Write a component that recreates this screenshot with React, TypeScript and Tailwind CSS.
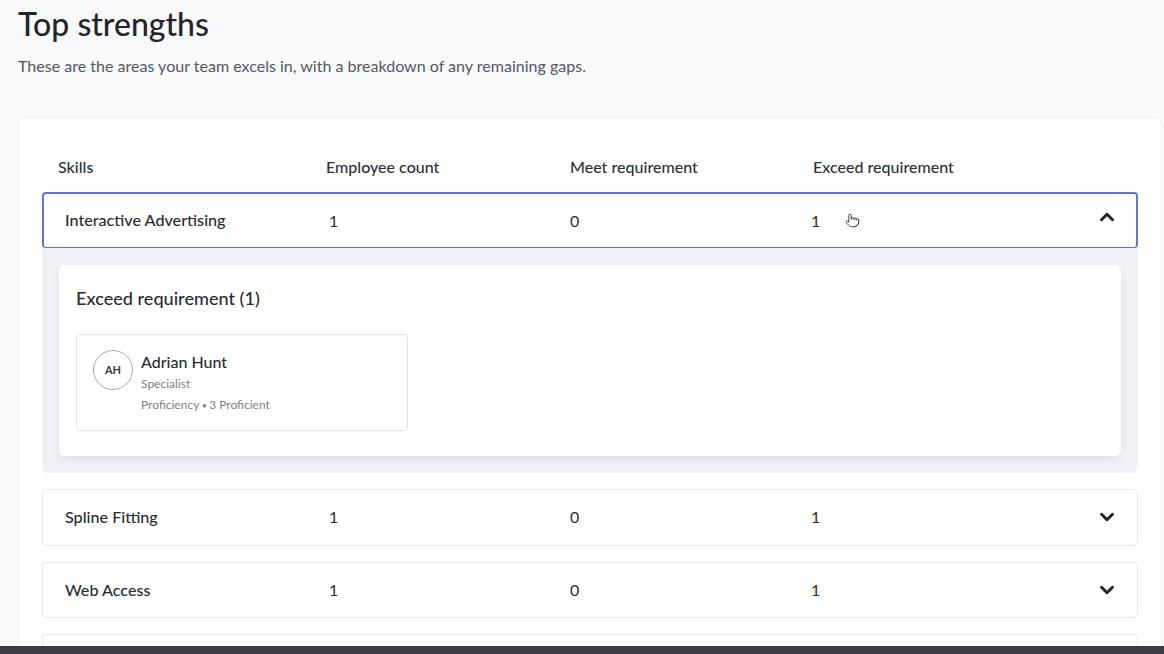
import React from 'react';
import { ChevronDown, ChevronUp, Pointer } from 'lucide-react';

const skills = [
  { name: 'Spline Fitting', count: 1, meet: 0, exceed: 1 },
  { name: 'Web Access', count: 1, meet: 0, exceed: 1 },
];

function RowCells({ name, count, meet, exceed }: { name: string; count: number; meet: number; exceed: number }) {
  return (
    <>
      <div className="w-[264px] text-[16.15px] font-medium text-[#2a2b2f]">{name}</div>
      <div className="w-[241px] text-[16px] text-[#2a2b2f]">{count}</div>
      <div className="w-[241px] text-[16px] text-[#2a2b2f]">{meet}</div>
      <div className="w-[34px] text-[16px] text-[#2a2b2f]">{exceed}</div>
    </>
  );
}

export default function App() {
  return (
    <div className="flex h-[654px] w-[1164px] flex-col overflow-hidden bg-[#f8f9fb] font-['Lato',sans-serif]">
      <div className="min-h-0 flex-1 overflow-hidden pl-[18px] pr-[2px]">
        <h1 className="mt-[5px] text-[32px] leading-[38px] font-medium text-[#23242a]">Top strengths</h1>
        <p className="mt-[11px] text-[16.05px] leading-[24px] text-[#55575e]">
          These are the areas your team excels in, with a breakdown of any remaining gaps.
        </p>

        <div className="mt-[39px] rounded-t-lg border border-[#eff0f3] bg-white px-[23px] pt-[37px] pb-4">
          <div className="flex h-[24px] items-center pl-[16px] text-[16.05px] leading-[24px] font-medium text-[#2f3036]">
            <div className="w-[268px]">Skills</div>
            <div className="w-[244px]">Employee count</div>
            <div className="w-[243px]">Meet requirement</div>
            <div>Exceed requirement</div>
          </div>

          <div className="mt-[13px] rounded-md bg-[#f1f2f7] pb-[17px]">
            <div className="flex h-[56px] items-center rounded-[4px] border-2 border-[#5b78d3] border-t-2 border-b bg-white pr-[18px] pl-[21px]">
              <RowCells name="Interactive Advertising" count={1} meet={0} exceed={1} />
              <Pointer size={15} strokeWidth={1.5} className="text-[#3a3b40]" />
              <ChevronUp size={22} strokeWidth={3.2} className="mt-[-7px] ml-auto text-[#22232a]" />
            </div>

            <div className="mx-[17px] mt-[17px] h-[191px] rounded-md bg-white px-[17px] pt-[20px] shadow-[0_4px_10px_rgba(30,35,60,0.08)]">
              <h2 className="text-[18.1px] leading-[26px] font-medium text-[#2a2b31]">Exceed requirement (1)</h2>
              <div className="mt-[23px] flex h-[97px] w-[332px] gap-2 rounded border border-[#e4e5e9] bg-white pt-[15px] pl-4">
                <div className="flex h-10 w-10 shrink-0 items-center justify-center rounded-full border border-[#a9abb0] text-[11px] font-bold text-[#3a3b40]">
                  AH
                </div>
                <div>
                  <div className="mt-[1px] text-[16px] leading-[22px] font-medium text-[#2a2b31]">Adrian Hunt</div>
                  <div className="mt-[1px] text-[12px] leading-[20px] text-[#7d7f87]">Specialist</div>
                  <div className="mt-[1px] text-[12px] leading-[20px] text-[#7d7f87]">
                    Proficiency<span className="text-[9px]"> • </span>3 Proficient
                  </div>
                </div>
              </div>
            </div>
          </div>

          <div className="mt-4 flex flex-col gap-4">
            {skills.map((skill) => (
              <div
                key={skill.name}
                className="flex h-[56.5px] items-center rounded-[4px] border border-[#e8e9ed] bg-white pr-[19px] pl-[22px]"
              >
                <RowCells {...skill} />
                <ChevronDown size={22} strokeWidth={3.2} className="ml-auto text-[#22232a]" />
              </div>
            ))}
            <div className="h-[57px] rounded-[4px] border border-[#e8e9ed] bg-white" />
          </div>
        </div>
      </div>
      <div className="h-2 shrink-0 bg-[#3c3d42]" />
    </div>
  );
}
